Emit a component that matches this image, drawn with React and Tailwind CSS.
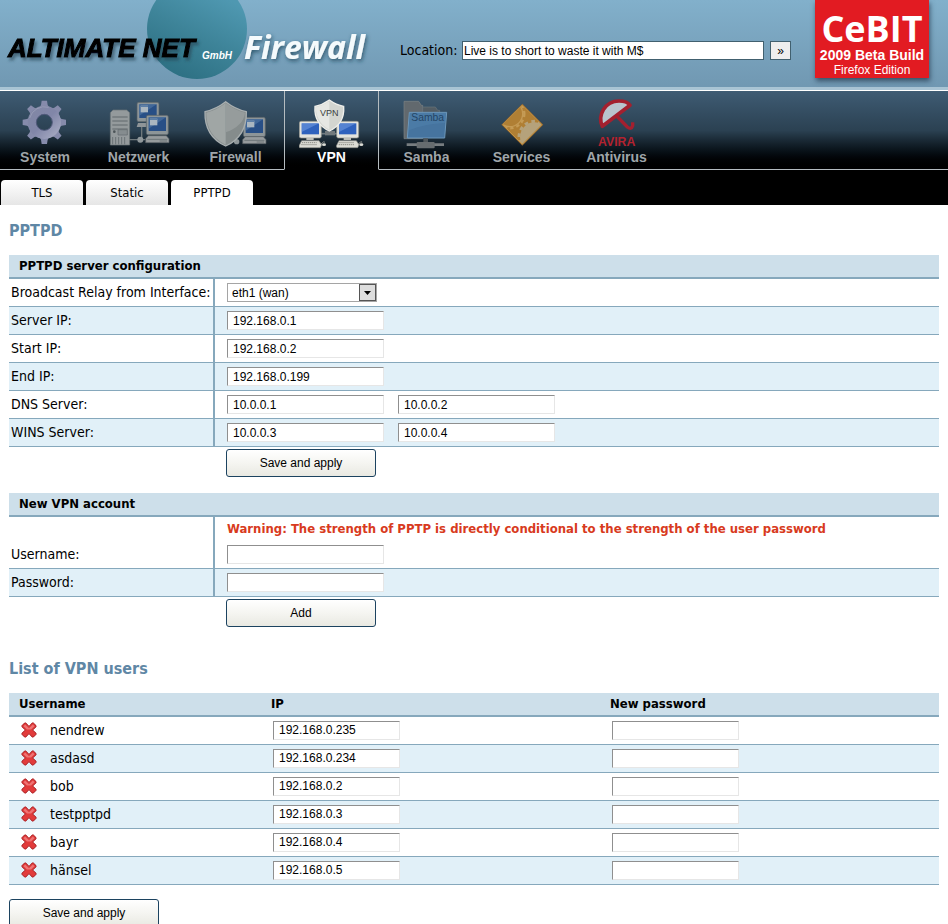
import React, { useState } from "react";

const navItems = [
  { name: "System", icon: SystemIcon, cell: "w-[90px]" },
  { name: "Netzwerk", icon: NetworkIcon, cell: "w-[97px]" },
  { name: "Firewall", icon: FirewallIcon, cell: "w-[97px]" },
  { name: "VPN", icon: VpnIcon, cell: "w-[95px]" },
  { name: "Samba", icon: SambaIcon, cell: "w-[95px]" },
  { name: "Services", icon: ServicesIcon, cell: "w-[95px]" },
  { name: "Antivirus", icon: AntivirusIcon, cell: "w-[95px]" },
];

const tabs = ["TLS", "Static", "PPTPD"];

const serverRows = [
  { label: "Server IP:", values: ["192.168.0.1"] },
  { label: "Start IP:", values: ["192.168.0.2"] },
  { label: "End IP:", values: ["192.168.0.199"] },
  { label: "DNS Server:", values: ["10.0.0.1", "10.0.0.2"] },
  { label: "WINS Server:", values: ["10.0.0.3", "10.0.0.4"] },
];

const users = [
  { name: "nendrew", ip: "192.168.0.235" },
  { name: "asdasd", ip: "192.168.0.234" },
  { name: "bob", ip: "192.168.0.2" },
  { name: "testpptpd", ip: "192.168.0.3" },
  { name: "bayr", ip: "192.168.0.4" },
  { name: "hänsel", ip: "192.168.0.5" },
];

const fieldClass =
  "block h-[19px] border border-t-[#8f8f8f] border-l-[#8f8f8f] border-r-[#e6e6e6] border-b-[#e6e6e6] bg-white px-[5px] font-['Liberation_Sans',sans-serif] text-[12px] leading-4 text-black outline-none";

/* ---------- icons ---------- */

const IconBox = ({ children }) => (
  <svg viewBox="0 0 198 150" className="h-[50px] w-[66px] shrink-0" aria-hidden="true">
    {children}
  </svg>
);

// Small CRT with a blue screen, 66 x 58 units
const Monitor = ({ x, y, h = 58, bright = false }) => (
  <g transform={`translate(${x} ${y})`}>
    <rect width="66" height={h} rx="5" fill={bright ? "#e4e4de" : "#8d9598"} stroke={bright ? "#8f8f88" : "#565f64"} strokeWidth="2" />
    <rect x="7" y="6" width="52" height={h - 17} fill={bright ? "#2f62bd" : "#284f86"} />
    <path d={`M7 6h52L7 ${h - 18}z`} fill={bright ? "#6f9ae0" : "#5379a6"} opacity="0.6" />
    {!bright && <rect x="11" y="10" width="22" height="20" fill="#aab6c0" />}
    {!bright && <rect x="11" y="10" width="22" height="4" fill="#5c7ea6" />}
  </g>
);

const BaseUnit = ({ x, y }) => (
  <g transform={`translate(${x} ${y})`}>
    <path d="M8 -7h54l8 9v12H0V2z" fill="#969b9d" stroke="#555c60" strokeWidth="2" />
    <path d="M5 4h60M42 9h22" stroke="#5b6367" strokeWidth="2" />
  </g>
);

const Keyboard = ({ x, y }) => (
  <g transform={`translate(${x} ${y})`}>
    <path d="M22 -8h22v6H22z" fill="#bdbdb6" />
    <path d="M8 0h52l8 12-4 9H2l-2-5z" fill="#dcdcd5" stroke="#8d8d86" strokeWidth="2" />
    <path d="M9 6h44M7 12h46" stroke="#8d8d86" strokeWidth="3" strokeDasharray="4 2" />
    <path d="M66 10q12-12 10-4" fill="none" stroke="#b9b9b2" strokeWidth="2" />
    <ellipse cx="75" cy="12" rx="6" ry="4" fill="#dcdcd5" />
  </g>
);

function SystemIcon() {
  return (
    <IconBox>
      <defs>
        <linearGradient id="gear" x1="0" y1="0" x2="1" y2="1">
          <stop offset="0" stopColor="#8187a5" />
          <stop offset="0.5" stopColor="#8186a8" />
          <stop offset="1" stopColor="#a3a7c0" />
        </linearGradient>
      </defs>
      <g transform="translate(97 70)">
        {[0, 45, 90, 135, 180, 225, 270, 315].map((a) => (
          <path key={a} d="M-16 -42L-10 -52L-8 -65H8L10 -52L16 -42z" fill="#868bab" transform={`rotate(${a})`} />
        ))}
        <circle r="37" fill="none" stroke="url(#gear)" strokeWidth="26" />
        <circle r="24" fill="none" stroke="#50597a" strokeWidth="3" />
        <path d="M-44 -13a46 46 0 0 1 57-32" fill="none" stroke="#a4a9c0" strokeWidth="3" opacity="0.6" />
      </g>
    </IconBox>
  );
}

function NetworkIcon() {
  return (
    <IconBox>
      <path d="M68 122h50M107 122V80" stroke="#6f787c" strokeWidth="4" />
      <Monitor x={93} y={10} />
      <path d="M96 72h26v12H92z" fill="#8f9598" />
      <Monitor x={121} y={49} />
      <BaseUnit x={119} y={117} />
      <circle cx="103" cy="122" r="9" fill="#8f979a" />
      <path d="M13 41l8-8h41l9 8v97H13z" fill="#949a9c" stroke="#6a7276" strokeWidth="2" />
      <path d="M19 54h46M19 66h46M19 78h46M19 90h46" stroke="#60686c" strokeWidth="3" />
      <circle cx="25" cy="98" r="4" fill="#4c5458" />
      <path d="M36 92h28v16H36z" fill="#858c8f" stroke="#60686c" strokeWidth="2" />
      <path d="M20 114v22M29 114v22M38 114v22M47 114v22M56 114v22" stroke="#6b7377" strokeWidth="3" />
    </IconBox>
  );
}

function FirewallIcon() {
  return (
    <IconBox>
      <Monitor x={121} y={55} />
      <BaseUnit x={119} y={120} />
      <circle cx="101" cy="128" r="8" fill="#8f979a" />
      <path d="M68 8Q40 30 6 38Q4 112 68 141Q132 112 130 38Q96 30 68 8z" fill="#858c8c" stroke="#a9afb0" strokeWidth="4" />
      <path d="M68 12Q42 33 10 41Q9 108 68 137z" fill="#a0a6a5" />
      <path d="M68 12Q94 33 126 41Q122 80 68 100z" fill="#969c9c" />
    </IconBox>
  );
}

function VpnIcon() {
  return (
    <IconBox>
      <path d="M62 104h60" stroke="#6f7a80" strokeWidth="5" />
      <rect x="78" y="96" width="30" height="13" fill="#71797d" />
      <Monitor x={1} y={67} h={50} bright />
      <Monitor x={113} y={67} h={50} bright />
      <Keyboard x={0} y={125} />
      <Keyboard x={112} y={125} />
      <path d="M91 3Q70 18 48 22Q44 74 91 96Q138 74 134 22Q112 18 91 3z" fill="#d3d5d0" stroke="#f0f0ec" strokeWidth="4" />
      <path d="M91 7Q72 20 51 25Q50 70 91 92z" fill="#e6e7e3" />
      <text x="91" y="50" textAnchor="middle" fontFamily="Liberation Sans, sans-serif" fontWeight="400" fontSize="27" fill="#3b3f40">
        VPN
      </text>
    </IconBox>
  );
}

function SambaIcon() {
  return (
    <IconBox>
      <path d="M30 7h44l8 12h4v100H30z" fill="#62696e" stroke="#7b8387" strokeWidth="2" />
      <path d="M86 24h38l7 10h6v20H86z" fill="#535d64" stroke="#6b757b" strokeWidth="2" />
      <path d="M46 40h112l-6 77H40z" fill="#46749f" stroke="#6c97ba" strokeWidth="3" />
      <path d="M48 42h108l-3 30Q90 74 44 94z" fill="#4f80ab" opacity="0.6" />
      <text x="101" y="67" textAnchor="middle" fontFamily="Liberation Sans, sans-serif" fontWeight="400" fontSize="31" fill="#234565">
        Samba
      </text>
      <path d="M88 118h14v14H88z" fill="#50575b" />
      <path d="M38 137h112" stroke="#777d80" strokeWidth="8" />
      <rect x="68" y="129" width="54" height="19" rx="3" fill="#666c6f" />
    </IconBox>
  );
}

function ServicesIcon() {
  return (
    <IconBox>
      <defs>
        <clipPath id="sign">
          <path d="M100 19L158 77L100 135L42 77z" />
        </clipPath>
      </defs>
      <path d="M100 14L163 77L100 140L37 77z" fill="#8a6330" />
      <path d="M100 19L158 77L100 135L42 77z" fill="#b07f34" />
      <g clipPath="url(#sign)" fill="#b5a27b">
        <circle cx="137" cy="114" r="44" />
        <circle cx="137" cy="114" r="47" fill="none" stroke="#b5a27b" strokeWidth="9" strokeDasharray="11 10" />
        <circle cx="62" cy="44" r="39" fill="none" stroke="#c59b55" strokeWidth="4" />
        <circle cx="62" cy="44" r="44" fill="none" stroke="#c59b55" strokeWidth="7" strokeDasharray="10 9" />
      </g>
      <path d="M100 18L159 77L100 136L41 77z" fill="none" stroke="#c69443" strokeWidth="3" />
    </IconBox>
  );
}

function AntivirusIcon() {
  return (
    <IconBox>
      <path d="M55 82C40 50 62 6 105 6C122 6 133 11 138 19z" fill="#b9c4ce" stroke="#a3202f" strokeWidth="11" strokeLinejoin="round" />
      <path d="M98 51L130 84Q142 93 146 80V70" fill="none" stroke="#a3202f" strokeWidth="10" />
      <text x="98" y="142" textAnchor="middle" fontFamily="Liberation Sans, sans-serif" fontWeight="700" fontSize="37" fill="#b3222f">
        AVIRA
      </text>
    </IconBox>
  );
}

const DeleteIcon = () => (
  <svg viewBox="0 0 16 16" className="size-4" aria-hidden="true">
    <path
      d="M1 3.6L3.6 1Q4.2 .6 4.8 1L8 4.4L11.200 1Q11.800 .6 12.400 1L15 3.600Q15.400 4.200 15 4.800L11.600 8L15 11.200Q15.400 11.800 15 12.400L12.400 15Q11.800 15.400 11.200 15L8 11.600L4.800 15Q4.200 15.400 3.600 15L1 12.400Q.6 11.800 1 11.200L4.400 8L1 4.800Q.6 4.200 1 3.600z"
      fill="#e23b3b"
      stroke="#a81e22"
      strokeWidth="1"
    />
    <path d="M2.500 4.200L4.200 2.500L8 6.300L11.800 2.500L13.500 4.200L10 7.500H6z" fill="#ee7474" />
  </svg>
);

const Logo = () => (
  <svg viewBox="0 0 380 87" className="h-[87px] w-[380px] shrink-0" role="img" aria-label="Altimate Net GmbH Firewall">
    <defs>
      <linearGradient id="globe" x1="0.8" y1="0.2" x2="0.4" y2="1">
        <stop offset="0" stopColor="#4f98b1" />
        <stop offset="0.5" stopColor="#3e8499" />
        <stop offset="1" stopColor="#2e7184" />
      </linearGradient>
      <filter id="dark" x="-10%" y="-30%" width="120%" height="180%">
        <feDropShadow dx="2" dy="3" stdDeviation="1.500" floodColor="#27414f" floodOpacity="0.6" />
      </filter>
      <filter id="glow" x="-10%" y="-30%" width="120%" height="180%">
        <feDropShadow dx="1" dy="2" stdDeviation="2" floodColor="#1f4356" floodOpacity="0.8" />
      </filter>
    </defs>
    <circle cx="197" cy="29" r="50" fill="url(#globe)" />
    <text x="8" y="57" fontFamily="Liberation Sans, sans-serif" fontWeight="700" fontStyle="italic" fontSize="26" fill="#000" stroke="#000" strokeWidth="1" filter="url(#dark)">
      ALTIMATE NET
    </text>
    <text x="202" y="59" fontFamily="Liberation Sans, sans-serif" fontWeight="700" fontStyle="italic" fontSize="10" fill="#fff">
      GmbH
    </text>
    <text x="244" y="59" fontFamily="Open Sans, sans-serif" fontWeight="700" fontStyle="italic" fontSize="32" fill="#f4fafc" filter="url(#glow)">
      Firewall
    </text>
  </svg>
);

const CebitBadge = () => (
  <div className="h-[78px] w-[114px] shrink-0 bg-[#e21b22] text-center font-['Liberation_Sans',sans-serif] text-white shadow-[1px_3px_5px_rgba(30,50,70,0.7)]">
    <svg viewBox="0 0 114 47" className="block h-[47px] w-[114px]" role="img" aria-label="CeBIT">
      <text x="57" y="42" textAnchor="middle" fontFamily="Open Sans, sans-serif" fontWeight="700" fontSize="36" fill="#fff">
        CeBIT
      </text>
    </svg>
    <p className="text-[14px] leading-4 font-bold whitespace-nowrap">2009 Beta Build</p>
    <p className="text-[12px] leading-[14px] whitespace-nowrap">Firefox Edition</p>
  </div>
);

/* ---------- form parts ---------- */

const SectionHeader = ({ children }) => (
  <h3 className="h-6 border-b-2 border-[#86a8bc] bg-[#cddfea] pl-[10px] text-[13px] leading-[22px] font-bold">{children}</h3>
);

const FormRow = ({ label, htmlFor, shaded, note, children }) => (
  <div className={`flex border-b border-[#86a8bc] ${shaded ? "bg-[#e1f0f8]" : "bg-white"}`}>
    <div className="flex w-[206px] shrink-0 items-end border-r-2 border-[#86a8bc] pl-[2px]">
      <label htmlFor={htmlFor} className="leading-[27px] whitespace-nowrap">
        {label}
      </label>
    </div>
    <div className="flex-1 pl-3">
      {note && <p className="text-[13px] leading-6 font-bold text-[#d83a20]">{note}</p>}
      <div className="flex h-[27px] items-center gap-[14px]">{children}</div>
    </div>
  </div>
);

const Button = ({ children, type = "button" }) => (
  <button
    type={type}
    className="block h-7 w-[150px] rounded-[3px] border border-[#1c4360] bg-linear-to-b from-white via-[#f5f5f1] to-[#e9e9e2] text-center font-['Liberation_Sans',sans-serif] text-[12px] text-black"
  >
    {children}
  </button>
);

const App = () => {
  const [activeTab, setActiveTab] = useState("PPTPD");
  const [activeNav, setActiveNav] = useState("VPN");

  return (
    <div className="bg-white font-['DejaVu_Sans_Condensed','DejaVu_Sans',sans-serif] text-[14px] text-black">
      {/* Header */}
      <header className="flex h-[91px] items-start border-b border-white bg-linear-to-b from-[#82b0cb] to-[#7097b1] shadow-[inset_0_-3px_0_#a9c4d4]">
        <Logo />
        <form className="mt-[41px] ml-5 flex items-center" onSubmit={(e) => e.preventDefault()}>
          <label htmlFor="location" className="w-[62px] leading-[19px]">
            Location:
          </label>
          <input
            id="location"
            defaultValue="Live is to short to waste it with M$"
            className="h-[19px] w-[302px] border border-[#41606f] bg-white px-px font-['Liberation_Sans',sans-serif] text-[12px] outline-none"
          />
          <button type="submit" className="ml-[6px] h-[19px] w-[21px] border border-[#41606f] bg-[#eeeeee] font-['Liberation_Sans',sans-serif] text-[12px] leading-4">
            »
          </button>
        </form>
        <div className="mr-[19px] ml-auto">
          <CebitBadge />
        </div>
      </header>

      {/* Main navigation */}
      <nav className="flex bg-linear-to-b from-[#3f5c74] via-[#2b4152] to-black">
        {navItems.map(({ name, icon: Icon, cell }) => {
          const active = name === activeNav;
          return (
            <a
              key={name}
              href={`#${name}`}
              onClick={() => setActiveNav(name)}
              className={`${cell} flex h-[79px] shrink-0 flex-col items-center border-b pt-2 font-['Liberation_Sans',sans-serif] text-[14px] leading-4 font-bold ${
                active ? "border-x border-x-[#b5bcc0] border-b-transparent text-white" : "border-b-[#b5bcc0] text-[#9fa5a9]"
              }`}
            >
              <Icon />
              {name}
            </a>
          );
        })}
        <div className="flex-1 border-b border-[#b5bcc0]" />
      </nav>

      {/* Tabs */}
      <div className="flex h-[35px] items-end gap-[3px] bg-black pl-px">
        {tabs.map((tab) => (
          <button
            key={tab}
            type="button"
            onClick={() => setActiveTab(tab)}
            className={`h-[25px] w-[82px] rounded-t-[4px] text-[13px] ${
              tab === activeTab ? "bg-white" : "bg-linear-to-b from-white to-[#e6e6e6]"
            }`}
          >
            {tab}
          </button>
        ))}
      </div>

      <main className="px-[9px] pt-4">
        <h2 className="text-[16px] leading-5 font-bold text-[#5f87a5]">PPTPD</h2>

        <form className="mt-[14px]" onSubmit={(e) => e.preventDefault()}>
          <SectionHeader>PPTPD server configuration</SectionHeader>
          <FormRow label="Broadcast Relay from Interface:" htmlFor="relay">
            <div className="relative">
              <select
                id="relay"
                className="block h-[19px] w-[150px] appearance-none border border-[#a5a5a5] bg-white pl-1 font-['Liberation_Sans',sans-serif] text-[12px] leading-4 outline-none"
              >
                <option>eth1 (wan)</option>
                <option>eth0 (lan)</option>
              </select>
              <span className="pointer-events-none absolute top-px right-px flex h-[17px] w-[17px] items-center justify-center border border-[#555555] bg-[#dddddd]">
                <svg viewBox="0 0 7 4" className="h-1 w-[7px]" aria-hidden="true">
                  <path d="M0 0h7L3.500 4z" />
                </svg>
              </span>
            </div>
          </FormRow>
          {serverRows.map((row, i) => (
            <FormRow key={row.label} label={row.label} htmlFor={`server-${i}-0`} shaded={i % 2 === 0}>
              {row.values.map((value, n) => (
                <input
                  key={n}
                  id={`server-${i}-${n}`}
                  aria-label={`${row.label} ${n + 1}`}
                  defaultValue={value}
                  className={`${fieldClass} w-[157px]`}
                />
              ))}
            </FormRow>
          ))}
          <div className="pt-[2px] pl-[217px]">
            <Button type="submit">Save and apply</Button>
          </div>
        </form>

        <form className="mt-4" onSubmit={(e) => e.preventDefault()}>
          <SectionHeader>New VPN account</SectionHeader>
          <FormRow
            label="Username:"
            htmlFor="new-user"
            note="Warning: The strength of PPTP is directly conditional to the strength of the user password"
          >
            <input id="new-user" className={`${fieldClass} w-[157px]`} />
          </FormRow>
          <FormRow label="Password:" htmlFor="new-pass" shaded>
            <input id="new-pass" type="password" className={`${fieldClass} w-[157px]`} />
          </FormRow>
          <div className="pt-[2px] pl-[217px]">
            <Button type="submit">Add</Button>
          </div>
        </form>

        <h2 className="mt-8 text-[16px] leading-5 font-bold text-[#5f87a5]">List of VPN users</h2>

        <form className="mt-[14px]" onSubmit={(e) => e.preventDefault()}>
          <table className="w-full table-fixed border-collapse">
            <thead>
              <tr className="h-[23px] border-b-2 border-[#86a8bc] bg-[#cddfea] text-left text-[13px] leading-[22px]">
                <th className="w-[262px] p-0 pl-[10px]">Username</th>
                <th className="w-[339px] p-0">IP</th>
                <th className="p-0">New password</th>
              </tr>
            </thead>
            <tbody>
              {users.map((user, i) => (
                <tr key={user.name} className={`h-7 border-b border-[#86a8bc] ${i % 2 ? "bg-[#e1f0f8]" : "bg-white"}`}>
                  <td className="p-0 pl-3">
                    <div className="flex items-center gap-[13px] leading-5">
                      <button type="button" aria-label={`Delete ${user.name}`}>
                        <DeleteIcon />
                      </button>
                      {user.name}
                    </div>
                  </td>
                  <td className="p-0 pl-[2px]">
                    <input aria-label={`IP of ${user.name}`} defaultValue={user.ip} className={`${fieldClass} w-[127px]`} />
                  </td>
                  <td className="p-0 pl-[2px]">
                    <input type="password" aria-label={`New password for ${user.name}`} className={`${fieldClass} w-[127px]`} />
                  </td>
                </tr>
              ))}
            </tbody>
          </table>
          <div className="pt-[14px]">
            <Button type="submit">Save and apply</Button>
          </div>
        </form>
      </main>
    </div>
  );
};

export default App;
